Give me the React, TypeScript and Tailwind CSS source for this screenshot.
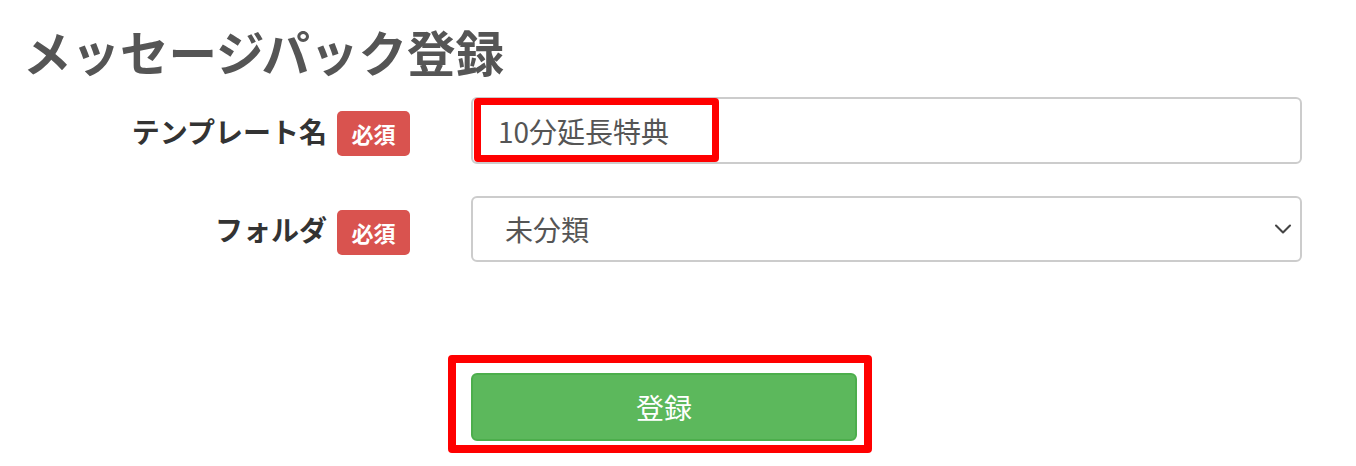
import { ChevronDown } from "lucide-react"

const font = { fontFamily: '"Noto Sans CJK JP", "Noto Sans", sans-serif' }

function RequiredBadge() {
  return (
    <span className="mt-[6px] flex h-[45px] w-[73px] items-center justify-center rounded-[5px] bg-[#d9534f] text-[22px] font-bold text-white">
      必須
    </span>
  )
}

function FormRow({ label, children }: { label: string; children: React.ReactNode }) {
  return (
    <div className="flex items-center">
      <div className="flex w-[410px] items-center justify-end gap-[10px]">
        <span className="text-[28px] font-bold leading-none text-[#333]">{label}</span>
        <RequiredBadge />
      </div>
      <div className="ml-[61px] w-[831px]">{children}</div>
    </div>
  )
}

export default function App() {
  return (
    <div className="h-[466px] w-[1356px] overflow-hidden bg-white" style={font}>
      {/* タイトル */}
      <h1 className="pl-[23px] pt-[22px] text-[48.5px] font-bold leading-[58px] text-[#555]">
        メッセージパック登録
      </h1>

      <div className="mt-[17px] flex flex-col gap-[32px]">
        {/* テンプレート名 */}
        <FormRow label="テンプレート名">
          <div className="relative">
            <input
              type="text"
              defaultValue="10分延長特典"
              className="h-[67px] w-full rounded-[6px] border-2 border-[#ccc] pl-[25px] text-[28px] text-[#555] outline-none"
              style={font}
            />
            <div className="pointer-events-none absolute left-[3px] top-[1px] h-[64px] w-[245px] rounded-[4px] border-[7px] border-[#ff0000]" />
          </div>
        </FormRow>

        {/* フォルダ */}
        <FormRow label="フォルダ">
          <div className="relative">
            <select
              defaultValue="未分類"
              className="h-[66px] w-full appearance-none rounded-[6px] border-2 border-[#ccc] bg-white pl-[32px] text-[28px] text-[#555] outline-none"
              style={font}
            >
              <option>未分類</option>
            </select>
            <ChevronDown
              className="pointer-events-none absolute right-[5px] top-[19px] h-[28px] w-[28px] text-[#444]"
              strokeWidth={1.8}
            />
          </div>
        </FormRow>
      </div>

      {/* 登録ボタン */}
      <div className="relative ml-[471px] mt-[111px] w-[386px]">
        <button className="flex h-[68px] w-full items-center justify-center rounded-[6px] border-2 border-[#4cae4c] bg-[#5cb85c] text-[28px] text-white">
          登録
        </button>
        <div className="pointer-events-none absolute -left-[23px] -top-[18px] h-[98px] w-[424px] rounded-[4px] border-[8px] border-[#ff0000]" />
      </div>
    </div>
  )
}
